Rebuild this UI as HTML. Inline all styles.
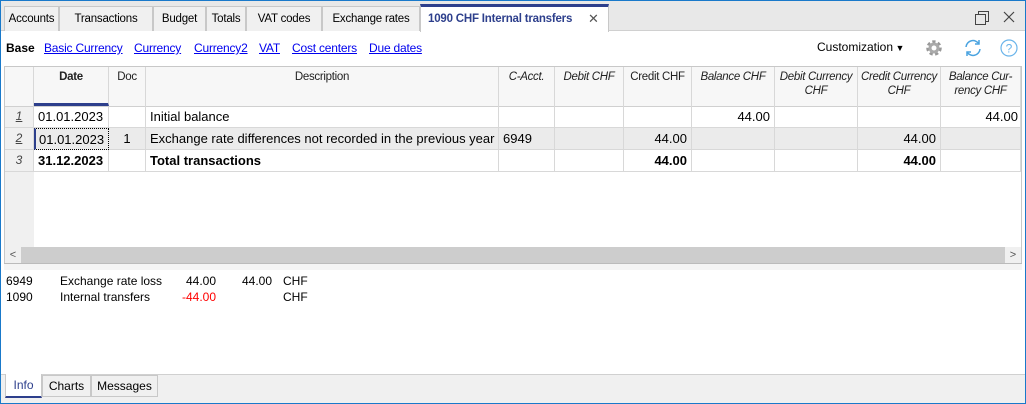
<!DOCTYPE html>
<html><head><meta charset="utf-8"><style>
*{box-sizing:border-box;margin:0;padding:0}
body{width:1026px;height:404px;overflow:hidden;background:#fff;font-family:"Liberation Sans",sans-serif;font-size:12px;color:#000;position:relative}
.a{position:absolute}
.tab{position:absolute;top:6px;height:25px;border:1px solid #c8c8c8;border-bottom:none;background:#f0f0f0;line-height:24px;text-align:center;font-size:11.5px;letter-spacing:-0.2px;white-space:nowrap}
.lnk{position:absolute;top:41px;color:#0000ee;text-decoration:underline;font-size:12px;letter-spacing:-0.2px}
.hd{position:absolute;top:67px;height:39px;border-right:1px solid #d8d8d8;background:#f7f7f7;text-align:center;font-size:11.5px;letter-spacing:-0.3px;color:#222;line-height:14px;padding-top:3px;white-space:nowrap}
.hd i{font-style:italic}
.c{position:absolute;height:22px;border-right:1px solid #d8d8d8;border-bottom:1px solid #d8d8d8;font-size:13px;line-height:21px;padding:0 4px;white-space:nowrap}
.r{text-align:right}
.b{font-weight:bold}
.i{font-size:12px}
</style></head><body>
<div class="a" style="left:0;top:0;width:1026px;height:31px;background:#e8e8e8;border-bottom:1px solid #d0d0d0"></div>
<div class="tab" style="left:4px;width:55px">Accounts</div>
<div class="tab" style="left:59px;width:94px">Transactions</div>
<div class="tab" style="left:153px;width:53px">Budget</div>
<div class="tab" style="left:206px;width:40px">Totals</div>
<div class="tab" style="left:246px;width:76px">VAT codes</div>
<div class="tab" style="left:322px;width:98px">Exchange rates</div>
<div class="tab" style="left:420px;width:189px;top:4px;height:28px;background:#fff;border-top:3px solid #2d3f8c;color:#2d3f8c;font-weight:bold;text-align:left;padding-left:7px;line-height:24px">1090 CHF Internal transfers<span style="position:absolute;left:167px;top:0;font-weight:normal;color:#555;font-size:13px">✕</span></div>
<svg class="a" style="left:973px;top:9px" width="18" height="18"><rect x="2.5" y="5.5" width="10" height="10" fill="none" stroke="#444"/><path d="M5.5 5.5V2.5H15.5V12.5H12.5" fill="none" stroke="#444"/></svg>
<svg class="a" style="left:1001px;top:9px" width="16" height="16"><path d="M3 3L13 13M13 3L3 13" stroke="#444" stroke-width="1.2"/></svg>
<div class="a b" style="left:6px;top:41px">Base</div>
<div class="lnk" style="left:44px">Basic Currency</div>
<div class="lnk" style="left:134px">Currency</div>
<div class="lnk" style="left:194px">Currency2</div>
<div class="lnk" style="left:259px">VAT</div>
<div class="lnk" style="left:292px">Cost centers</div>
<div class="lnk" style="left:369px">Due dates</div>
<div class="a" style="left:817px;top:40px;font-size:12px">Customization<span style="font-size:9px"> ▼</span></div>
<svg class="a" style="left:924px;top:38px" width="20" height="20"><circle cx="10" cy="10" r="6" fill="none" stroke="#999" stroke-width="3.5" stroke-dasharray="3 2.3"/><circle cx="10" cy="10" r="5.5" fill="#aaa"/><circle cx="10" cy="10" r="2.5" fill="#fff"/></svg>
<svg class="a" style="left:962px;top:37px" width="22" height="22"><path d="M4 10A7 7 0 0 1 17 7M18 12A7 7 0 0 1 5 15" fill="none" stroke="#4aa3e0" stroke-width="1.5"/><path d="M17 3V7H13M5 19V15H9" fill="none" stroke="#4aa3e0" stroke-width="1.5"/></svg>
<svg class="a" style="left:999px;top:38px" width="20" height="20"><circle cx="10" cy="10" r="8" fill="none" stroke="#6ab4ea" stroke-width="1.2"/><text x="10" y="14.5" font-size="12" text-anchor="middle" fill="#6ab4ea" font-family="Liberation Sans">?</text></svg>
<div class="a" style="left:4px;top:66px;width:1018px;height:198px;border:1px solid #c8c8c8;border-bottom:none"></div>
<div class="a" style="left:5px;top:67px;width:29px;height:180px;background:#f0f0f0"></div>
<div class="hd" style="left:5px;width:29px"></div>
<div class="hd" style="left:34px;width:75px;border-bottom:3px solid #2d3f8c;font-weight:bold">Date</div>
<div class="hd" style="left:109px;width:37px">Doc</div>
<div class="hd" style="left:146px;width:353px">Description</div>
<div class="hd" style="left:499px;width:56px"><i>C-Acct.</i></div>
<div class="hd" style="left:555px;width:69px"><i>Debit CHF</i></div>
<div class="hd" style="left:624px;width:68px">Credit CHF</div>
<div class="hd" style="left:692px;width:83px"><i>Balance CHF</i></div>
<div class="hd" style="left:775px;width:83px"><i>Debit Currency<br>CHF</i></div>
<div class="hd" style="left:858px;width:83px"><i>Credit Currency<br>CHF</i></div>
<div class="hd" style="left:941px;width:80px"><i>Balance Cur-<br>rency CHF</i></div>
<div class="a" style="left:5px;top:106px;width:1016px;height:1px;background:#d0d0d0"></div>
<div class="a" style="left:34px;top:128px;width:987px;height:22px;background:#ebebeb"></div>
<div class="c i" style="left:5px;top:106px;width:29px;text-align:center;font-style:italic;text-decoration:underline;color:#444">1</div>
<div class="c i" style="left:5px;top:128px;width:29px;text-align:center;font-style:italic;text-decoration:underline;color:#444">2</div>
<div class="c i" style="left:5px;top:150px;width:29px;text-align:center;font-style:italic;color:#444">3</div>
<div class="c" style="left:34px;top:106px;width:75px">01.01.2023</div>
<div class="c" style="left:34px;top:128px;width:75px;border:1px dotted #000;border-left:2px solid #2d3f8c;padding-left:3px">01.01.2023</div>
<div class="c b" style="left:34px;top:150px;width:75px">31.12.2023</div>
<div class="c" style="left:109px;top:106px;width:37px"></div>
<div class="c" style="left:109px;top:128px;width:37px;text-align:center">1</div>
<div class="c" style="left:109px;top:150px;width:37px"></div>
<div class="c" style="left:146px;top:106px;width:353px">Initial balance</div>
<div class="c" style="left:146px;top:128px;width:353px">Exchange rate differences not recorded in the previous year</div>
<div class="c b" style="left:146px;top:150px;width:353px">Total transactions</div>
<div class="c" style="left:499px;top:106px;width:56px"></div>
<div class="c" style="left:499px;top:128px;width:56px">6949</div>
<div class="c" style="left:499px;top:150px;width:56px"></div>
<div class="c" style="left:555px;top:106px;width:69px"></div>
<div class="c" style="left:555px;top:128px;width:69px"></div>
<div class="c" style="left:555px;top:150px;width:69px"></div>
<div class="c r" style="left:624px;top:106px;width:68px"></div>
<div class="c r" style="left:624px;top:128px;width:68px">44.00</div>
<div class="c r b" style="left:624px;top:150px;width:68px">44.00</div>
<div class="c r" style="left:692px;top:106px;width:83px">44.00</div>
<div class="c r" style="left:692px;top:128px;width:83px"></div>
<div class="c r" style="left:692px;top:150px;width:83px"></div>
<div class="c r" style="left:775px;top:106px;width:83px"></div>
<div class="c r" style="left:775px;top:128px;width:83px"></div>
<div class="c r" style="left:775px;top:150px;width:83px"></div>
<div class="c r" style="left:858px;top:106px;width:83px"></div>
<div class="c r" style="left:858px;top:128px;width:83px">44.00</div>
<div class="c r b" style="left:858px;top:150px;width:83px">44.00</div>
<div class="c r" style="left:941px;top:106px;width:80px;padding-right:2px">44.00</div>
<div class="c r" style="left:941px;top:128px;width:80px"></div>
<div class="c r" style="left:941px;top:150px;width:80px"></div>
<div class="a" style="left:5px;top:247px;width:1016px;height:16px;background:#cdcdcd"></div>
<div class="a" style="left:5px;top:247px;width:16px;height:16px;background:#f0f0f0;text-align:center;line-height:16px;font-size:11px;color:#555">&lt;</div>
<div class="a" style="left:1005px;top:247px;width:16px;height:16px;background:#f0f0f0;text-align:center;line-height:16px;font-size:11px;color:#555">&gt;</div>
<div class="a" style="left:4px;top:263px;width:1018px;height:1px;background:#bbb"></div>
<div class="a" style="left:4px;top:264px;width:1018px;height:6px;background:#f4f4f4"></div>
<div class="a" style="left:6px;top:274px;font-size:12px">6949</div>
<div class="a" style="left:60px;top:274px;font-size:12px">Exchange rate loss</div>
<div class="a" style="left:186px;top:274px;font-size:12px">44.00</div>
<div class="a" style="left:242px;top:274px;font-size:12px">44.00</div>
<div class="a" style="left:283px;top:274px;font-size:12px">CHF</div>
<div class="a" style="left:6px;top:290px;font-size:12px">1090</div>
<div class="a" style="left:60px;top:290px;font-size:12px">Internal transfers</div>
<div class="a" style="left:182px;top:290px;font-size:12px;color:#f00">-44.00</div>
<div class="a" style="left:283px;top:290px;font-size:12px">CHF</div>
<div class="a" style="left:0;top:374px;width:1026px;height:30px;background:#f0f0f0;border-top:1px solid #d0d0d0"></div>
<div class="a" style="left:5px;top:374px;width:37px;height:24px;background:#fff;border:1px solid #c8c8c8;border-top:none;border-bottom:2px solid #2d3f8c;text-align:center;line-height:22px;font-size:12px;color:#2d3f8c">Info</div>
<div class="a" style="left:42px;top:375px;width:49px;height:22px;border:1px solid #c8c8c8;background:#f0f0f0;text-align:center;line-height:20px;font-size:12px">Charts</div>
<div class="a" style="left:91px;top:375px;width:67px;height:22px;border:1px solid #c8c8c8;background:#f0f0f0;text-align:center;line-height:20px;font-size:12px">Messages</div>
<div class="a" style="left:0;top:31px;width:1026px;height:373px;border:1px solid #1979ca;border-top:none"></div>
<div class="a" style="left:0;top:0;width:1026px;height:31px;border:1px solid #1979ca;border-bottom:none"></div>
</body></html>
